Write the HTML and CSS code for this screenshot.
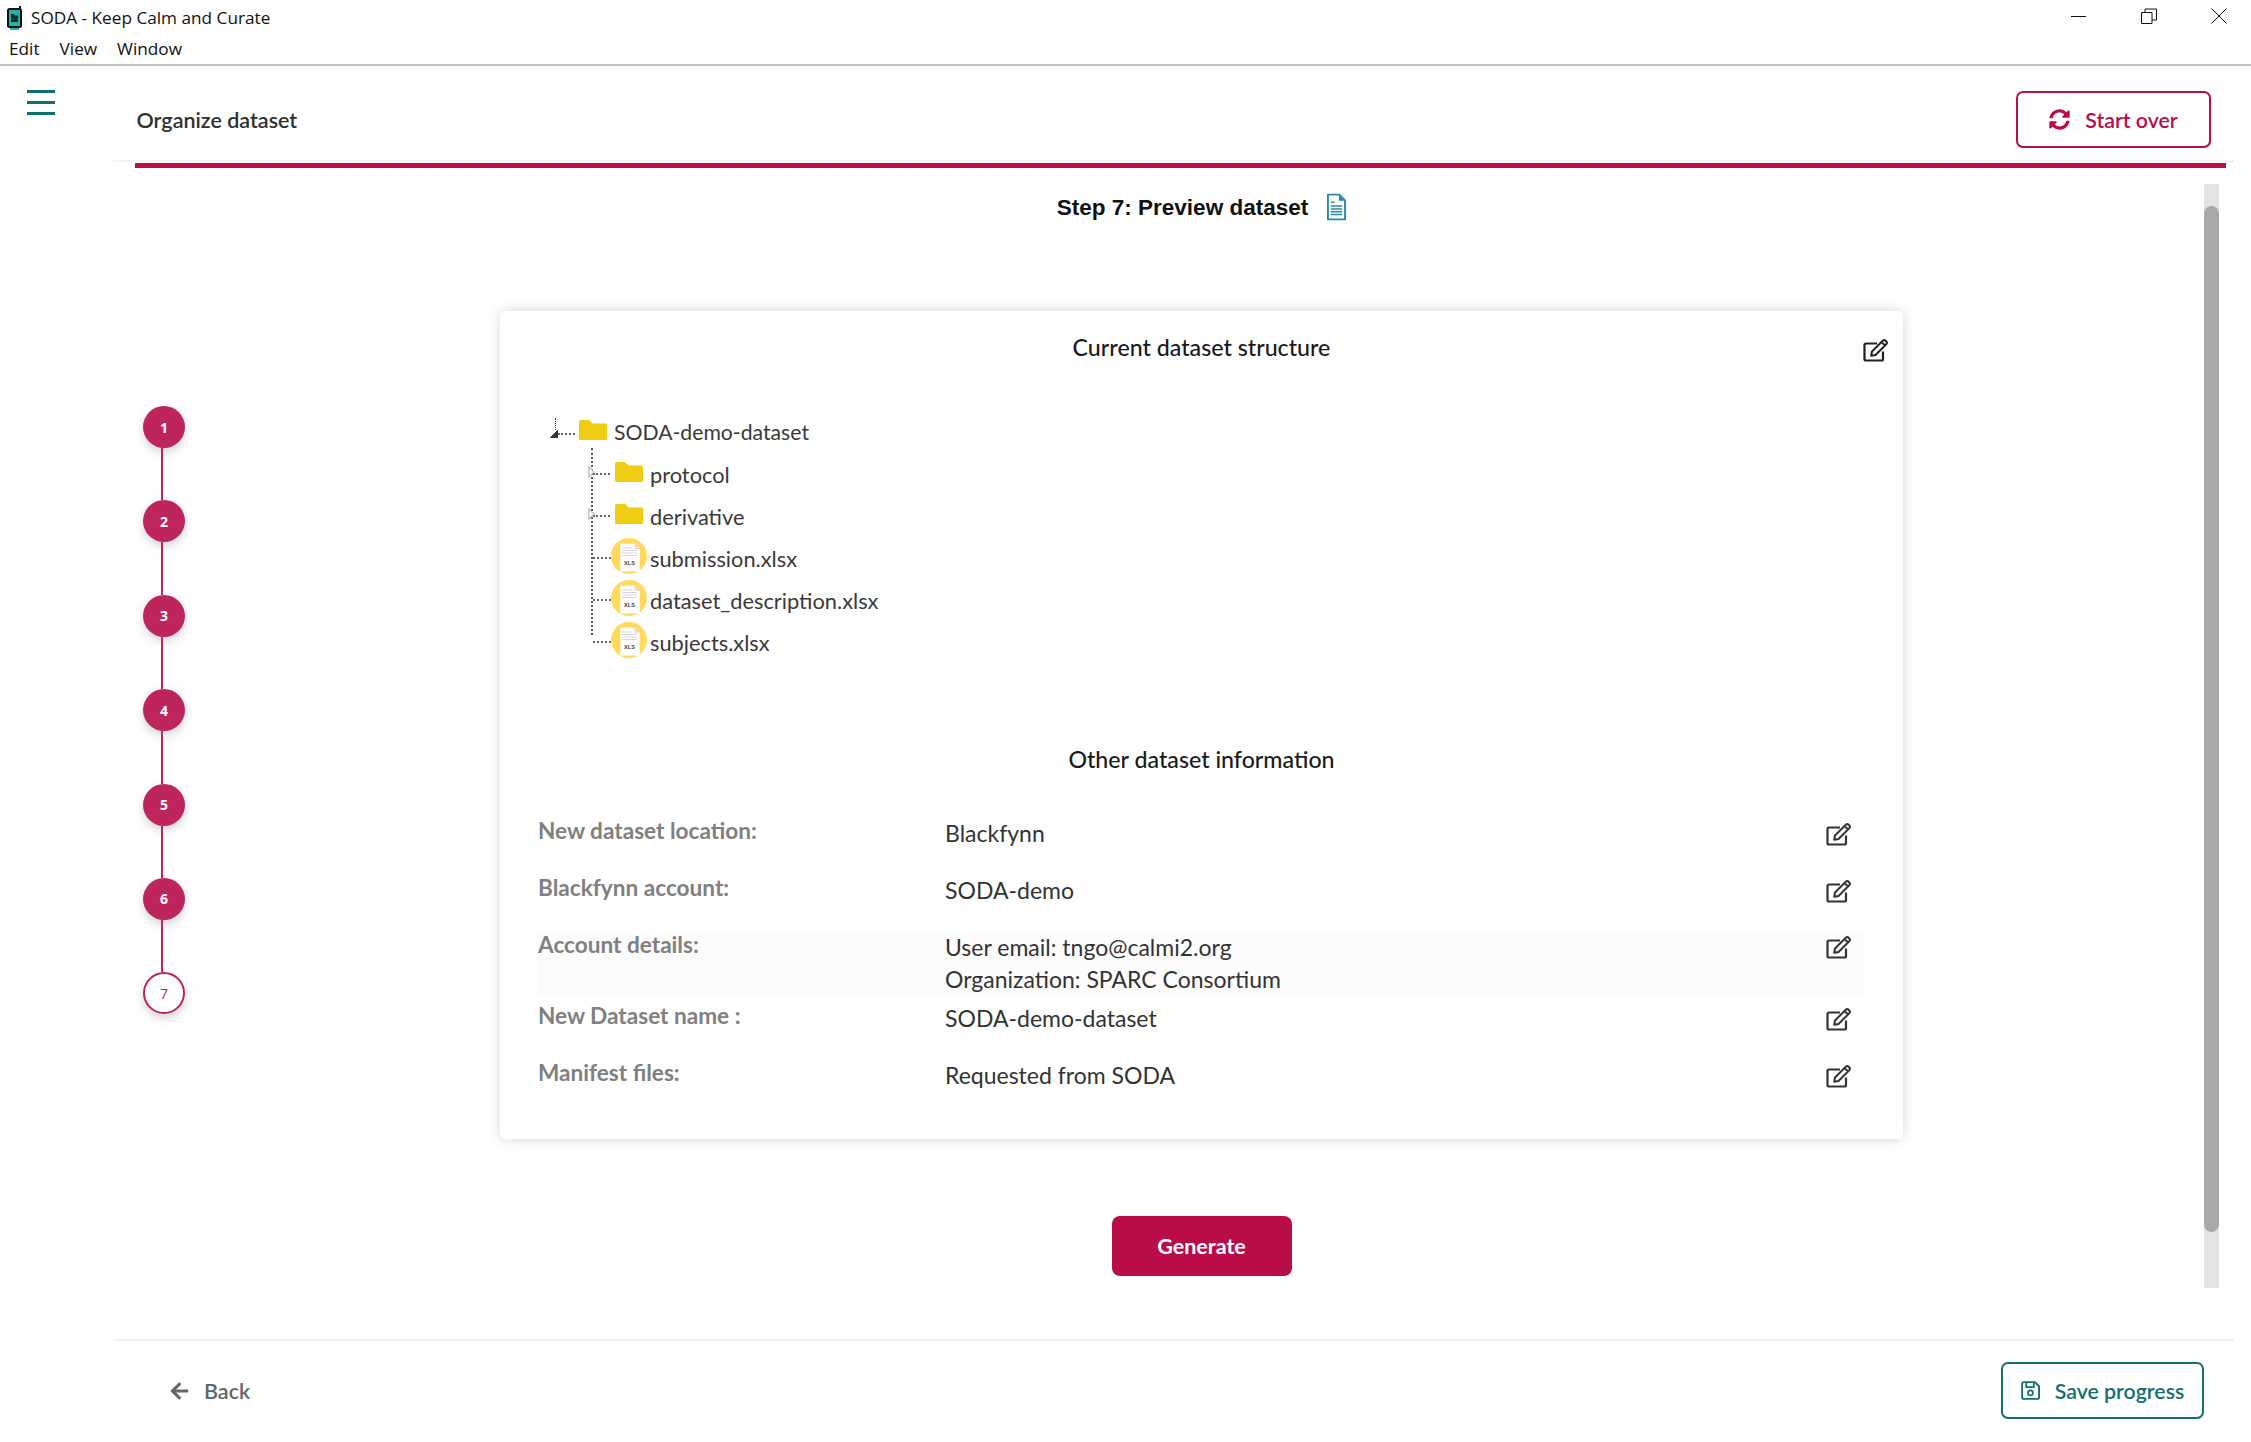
FILE: index.html
```html
<!DOCTYPE html>
<html lang="en">
<head>
<meta charset="utf-8">
<title>SODA - Keep Calm and Curate</title>
<link rel="stylesheet" href="styles.css">
</head>
<body>
<svg class="defs" width="0" height="0" aria-hidden="true">
  <symbol id="edit" viewBox="0 0 26 24">
    <path d="M20 13.500V21a1.500 1.500 0 0 1-1.500 1.500H3A1.500 1.500 0 0 1 1.500 21V7A1.500 1.500 0 0 1 3 5.500h11" fill="none" stroke="currentColor" stroke-width="2.200"/>
    <path d="M9 13.500 20 2.500a1.600 1.600 0 0 1 2.300 0l1.200 1.200a1.600 1.600 0 0 1 0 2.300L12.500 17l-4.300 .8zM18.500 4l3.500 3.500" fill="none" stroke="currentColor" stroke-width="2" stroke-linejoin="round"/>
  </symbol>
  <symbol id="folder" viewBox="0 0 28 20">
    <path d="M1.500 0h8.500l3.500 3.500h13A1.500 1.500 0 0 1 28 5v13.500a1.500 1.500 0 0 1-1.500 1.500h-25A1.500 1.500 0 0 1 0 18.500v-17A1.500 1.500 0 0 1 1.500 0z" fill="#eecd14"/>
  </symbol>
  <symbol id="xls-base" viewBox="0 0 36 36">
    <circle cx="18" cy="18" r="18" fill="#ffda5e"/>
    <path d="M9.300 5.800h14l5.400 5.200v22.500H9.300z" fill="#fff"/>
    <path d="M23.300 5.800v5.200h5.400z" fill="#dcdce6"/>
    <path d="M11 10h10M11 12.500h15M11 15h15M11 17.500h15" stroke="#d5d5df" stroke-width="1"/>
  </symbol>
  <symbol id="tri" viewBox="0 0 7 12">
    <path d="M.8 .8 6 6 .8 11.200z" fill="#fff" stroke="#bdbdbd" stroke-width="1.300"/>
  </symbol>
</svg>

<div class="titlebar">
  <div class="titlebar-left">
    <div class="title-row">
      <svg class="app-logo" viewBox="0 0 15 24" width="15" height="24"><path d="M12 0h2v3h-2z" fill="#111"/><rect x="0" y="2" width="15" height="20" rx="2.500" fill="#111"/><rect x="2" y="4" width="11" height="16" fill="#1eb3a6"/><path d="M4 8h3l1 1.500h3V16H4z" fill="#10302f"/><path d="M3 22h9v2H3z" fill="#1eb3a6"/></svg>
      <span>SODA - Keep Calm and Curate</span>
    </div>
    <nav class="menubar"><span>Edit</span><span>View</span><span>Window</span></nav>
  </div>
  <div class="window-controls">
    <svg viewBox="0 0 16 16" width="16" height="16"><path d="M0 8.500h15" stroke="#111" stroke-width="1"/></svg>
    <svg viewBox="0 0 16 16" width="16" height="16"><path d="M.5 4.500h10.500v11H.5zM4 4.500V1h11.500v11H11" fill="none" stroke="#111" stroke-width="1"/></svg>
    <svg viewBox="0 0 16 16" width="16" height="16"><path d="M.5 .5l15 15M15.500 .5l-15 15" stroke="#111" stroke-width="1"/></svg>
  </div>
</div>

<div class="top">
  <div class="menu-col">
    <div class="hamburger"><i></i><i></i><i></i></div>
  </div>
  <div class="head-block">
    <header class="head">
      <h1 class="page-title">Organize dataset</h1>
      <button class="btn btn-red">
        <svg class="ico-sync" viewBox="0 0 512 512"><path fill="currentColor" d="M370.72 133.28C339.458 104.008 298.888 87.962 255.848 88c-77.458.068-144.328 53.178-162.791 126.85-1.344 5.363-6.122 9.15-11.651 9.15H24.103c-7.498 0-13.194-6.807-11.807-14.176C33.933 94.924 134.813 8 256 8c66.448 0 126.791 26.136 171.315 68.685L463.03 40.97C478.149 25.851 504 36.559 504 57.941V192c0 13.255-10.745 24-24 24H345.941c-21.382 0-32.09-25.851-16.971-40.971l41.75-41.749zM32 296h134.059c21.382 0 32.09 25.851 16.971 40.971l-41.75 41.75c31.262 29.273 71.835 45.319 114.876 45.28 77.418-.07 144.315-53.144 162.787-126.849 1.344-5.363 6.122-9.15 11.651-9.15h57.304c7.498 0 13.194 6.807 11.807 14.176C478.067 417.076 377.187 504 256 504c-66.448 0-126.791-26.136-171.315-68.685L48.97 471.03C33.851 486.149 8 475.441 8 454.059V320c0-13.255 10.745-24 24-24z"/></svg>
        Start over
      </button>
    </header>
    <div class="red-bar"></div>
  </div>
</div>

<main class="main">
  <aside class="stepper">
    <div class="step">1</div><div class="conn"></div>
    <div class="step">2</div><div class="conn"></div>
    <div class="step">3</div><div class="conn"></div>
    <div class="step">4</div><div class="conn"></div>
    <div class="step">5</div><div class="conn"></div>
    <div class="step">6</div><div class="conn"></div>
    <div class="step step-open">7</div>
  </aside>
  <section class="content">
    <h2 class="step-title">Step 7: Preview dataset
      <svg class="ico-doc" viewBox="0 0 20 28"><path d="M1 1h12l6 6v20H1z" fill="none" stroke="#2b8ba3" stroke-width="2"/><path d="M12.500 1v6.500H19z" fill="#2b8ba3"/><path d="M4 9h4M4 13h12M4 16h12M4 19h12M4 22h12" stroke="#2b8ba3" stroke-width="1.600"/></svg>
    </h2>
    <div class="card">
      <div class="card-head">
        <h3 class="card-title">Current dataset structure</h3>
        <svg class="ico-edit ico-edit-top"><use href="#edit"/></svg>
      </div>
      <div class="tree">
        <div class="tree-row root">
          <span class="caret"></span><span class="dash"></span>
          <svg class="ico-folder"><use href="#folder"/></svg>
          <span class="node-label root-label">SODA-demo-dataset</span>
        </div>
        <div class="tree-children">
          <div class="tree-row"><svg class="tick"><use href="#tri"/></svg><span class="dash"></span><svg class="ico-folder"><use href="#folder"/></svg><span class="node-label">protocol</span></div>
          <div class="tree-row"><svg class="tick"><use href="#tri"/></svg><span class="dash"></span><svg class="ico-folder"><use href="#folder"/></svg><span class="node-label">derivative</span></div>
          <div class="tree-row"><span class="dash dash-file"></span><svg class="ico-xls" viewBox="0 0 36 36"><use href="#xls-base"/><text x="18.500" y="27" text-anchor="middle" class="xls-label">XLS</text></svg><span class="node-label">submission.xlsx</span></div>
          <div class="tree-row"><span class="dash dash-file"></span><svg class="ico-xls" viewBox="0 0 36 36"><use href="#xls-base"/><text x="18.500" y="27" text-anchor="middle" class="xls-label">XLS</text></svg><span class="node-label">dataset_description.xlsx</span></div>
          <div class="tree-row"><span class="dash dash-file"></span><svg class="ico-xls" viewBox="0 0 36 36"><use href="#xls-base"/><text x="18.500" y="27" text-anchor="middle" class="xls-label">XLS</text></svg><span class="node-label">subjects.xlsx</span></div>
        </div>
      </div>
      <h3 class="card-title other-title">Other dataset information</h3>
      <div class="info">
        <div class="info-row"><div class="info-label">New dataset location:</div><div class="info-value">Blackfynn</div><svg class="ico-edit"><use href="#edit"/></svg></div>
        <div class="info-row"><div class="info-label">Blackfynn account:</div><div class="info-value">SODA-demo</div><svg class="ico-edit"><use href="#edit"/></svg></div>
        <div class="info-row info-row-alt"><div class="info-label">Account details:</div><div class="info-value">User email: tngo@calmi2.org<br>Organization: SPARC Consortium</div><svg class="ico-edit"><use href="#edit"/></svg></div>
        <div class="info-row info-row-tight"><div class="info-label">New Dataset name :</div><div class="info-value">SODA-demo-dataset</div><svg class="ico-edit"><use href="#edit"/></svg></div>
        <div class="info-row"><div class="info-label">Manifest files:</div><div class="info-value">Requested from SODA</div><svg class="ico-edit"><use href="#edit"/></svg></div>
      </div>
    </div>
    <button class="generate">Generate</button>
  </section>
  <div class="scrollbar"><div class="thumb"></div></div>
</main>

<footer class="footer">
  <div class="back">
    <svg class="ico-back" viewBox="0 0 448 512"><path fill="currentColor" d="M257.500 445.100l-22.200 22.200c-9.400 9.400-24.600 9.400-33.900 0L7 273c-9.400-9.400-9.400-24.600 0-33.900L201.400 44.700c9.400-9.400 24.600-9.400 33.900 0l22.200 22.200c9.500 9.500 9.300 25-.4 34.300L136.600 216H424c13.300 0 24 10.700 24 24v32c0 13.300-10.700 24-24 24H136.600l120.500 114.800c9.800 9.300 10 24.800.4 34.300z"/></svg>
    Back
  </div>
  <button class="btn btn-teal">
    <svg class="ico-save" viewBox="0 0 20 20"><path d="M3 1.200h11.500L19 5.500V17a1.800 1.800 0 0 1-1.800 1.800H3A1.800 1.800 0 0 1 1.200 17V3A1.800 1.800 0 0 1 3 1.200z" fill="none" stroke="currentColor" stroke-width="2"/><path d="M5.500 1.500v5h8v-5" fill="none" stroke="currentColor" stroke-width="1.800"/><circle cx="10" cy="12.500" r="2.600" fill="none" stroke="currentColor" stroke-width="1.800"/></svg>
    Save progress
  </button>
</footer>
</body>
</html>
```
FILE: styles.css
```css
* { box-sizing: border-box; }
html, body { margin: 0; padding: 0; }
body {
  width: 2251px;
  height: 1442px;
  overflow: hidden;
  background: #fff;
  color: #303030;
  font-family: Lato, "Open Sans", sans-serif;
}
.defs { display: block; height: 0; }
.xls-label { font: 700 5.600px "Liberation Sans", sans-serif; fill: #444; }

/* window chrome */
.titlebar {
  display: flex;
  justify-content: space-between;
  height: 66px;
  border-bottom: 2px solid #c1c1c1;
  font-family: "Open Sans", sans-serif;
  font-size: 17.200px;
  color: #111;
}
.title-row { display: flex; align-items: center; gap: 9px; height: 35px; padding-left: 7px; }
.menubar { display: flex; gap: 20px; padding-left: 9px; height: 26px; align-items: center; font-size: 17.200px; }
.window-controls { display: flex; gap: 54px; padding: 8px 24px 0 0; align-items: flex-start; }

/* page header */
.top { display: flex; }
.menu-col { width: 113px; padding: 24px 0 0 27px; }
.hamburger { display: flex; flex-direction: column; gap: 8px; width: 28px; }
.hamburger i { display: block; height: 3px; background: #13716d; }
.head-block { flex: 1; margin-right: 17px; }
.head {
  display: flex;
  justify-content: space-between;
  align-items: center;
  padding: 25px 23px 12px 23.500px;
  border-bottom: 2px solid #f3f3f3;
}
.page-title { margin: 0; font-size: 21.500px; font-weight: 600; color: #303030; }
.red-bar { height: 5px; margin: 1px 8px 0 22px; background: #b80d49; }

.btn {
  display: flex;
  align-items: center;
  justify-content: center;
  height: 57px;
  border-radius: 7px;
  background: #fff;
  font: 600 21.300px Lato, sans-serif;
}
.btn-red { width: 195px; gap: 15px; border: 2px solid #b80d49; color: #b80d49; }
.btn-teal { width: 203px; gap: 15px; border: 2px solid #13716d; color: #13716d; }
.ico-sync { width: 21px; height: 21px; }
.ico-save { width: 19px; height: 19px; }
.ico-back { width: 19px; height: 20px; }

/* main */
.main { display: flex; height: 1104px; margin-top: 16px; }
.stepper {
  width: 199px;
  padding: 222px 0 0 143px;
  display: flex;
  flex-direction: column;
}
.step {
  flex: none;
  width: 42px;
  height: 42px;
  border-radius: 50%;
  background: #bf255d;
  color: #fff;
  display: flex;
  align-items: center;
  justify-content: center;
  font: 700 14px "Open Sans", sans-serif;
  box-shadow: 0 4px 10px rgba(60, 60, 70, .22);
}
.step-open { background: #fff; border: 2px solid #bf255d; color: #bf255d; font-weight: 400; }
.conn { flex: none; width: 2px; height: 52.400px; margin-left: 18px; background: #bf255d; }

.content {
  flex: none;
  width: 2005px;
  display: flex;
  flex-direction: column;
  align-items: center;
  padding-top: 8px;
}
.step-title {
  display: flex;
  align-items: center;
  gap: 19px;
  height: 32px;
  margin: 0;
  font: 700 22.500px "Liberation Sans", sans-serif;
  color: #111;
}
.ico-doc { width: 19px; height: 28px; margin-top: -3px; }

.card {
  position: relative;
  width: 1403px;
  height: 828px;
  margin-top: 87px;
  padding: 20px 38px 0;
  border-radius: 5px;
  background: #fff;
  box-shadow: 0 0 12px rgba(0, 0, 0, .17);
}
.card-title { margin: 0; height: 32px; line-height: 32px; text-align: center; font-size: 23.200px; font-weight: 500; color: #1a1a1a; }
.card-head { position: relative; }
.ico-edit { flex: none; width: 26px; height: 24px; color: #333; }
.ico-edit-top { position: absolute; right: -24px; top: 7px; color: #222; }

/* tree */
.tree { margin: 48px 0 0 12px; font-size: 21.800px; color: #3a3a3a; }
.tree-row { position: relative; display: flex; align-items: center; height: 42px; }
.caret {
  position: relative;
  width: 8px;
  height: 8px;
  margin-top: 3px;
  background: linear-gradient(135deg, transparent 50%, #333 50%);
}
.caret::before {
  content: "";
  position: absolute;
  left: 5px;
  top: -12px;
  height: 12px;
  border-left: 1px dotted #333;
}
.dash { width: 17px; height: 0; border-top: 2px dotted #666; }
.root .dash { margin: 3px 4px 0 0; width: 17px; }
.ico-folder { flex: none; width: 28px; height: 20px; margin-top: -4px; }
.node-label { margin-left: 7px; }
.root-label { font-size: 21.200px; }
.tree-children {
  position: relative;
  margin: -5px 0 0 41px;
  padding: 5px 0 0 2px;
}
.tree-children::before {
  content: "";
  position: absolute;
  left: 0;
  top: 0;
  height: 187px;
  border-left: 2px dotted #555;
}
.tree-children .ico-folder { margin-left: 5px; }
.tick {
  position: absolute;
  left: -5px;
  width: 7px;
  height: 12px;
  margin-top: -4px;
}
.dash-file { width: 18px; }
.ico-xls { flex: none; width: 36px; height: 36px; margin-top: -4px; }
.ico-xls + .node-label { margin-left: 3px; }

.other-title { margin-top: 80px; }

/* info */
.info { display: flex; flex-direction: column; margin-top: 42px; font-size: 23px; }
.info-row {
  display: flex;
  align-items: flex-start;
  margin-bottom: 25px;
  line-height: 32px;
}
.info-label { flex: none; width: 407px; margin-top: -2px; color: #808080; font-weight: 700; font-size: 22.600px; }
.info-value { flex: 1; color: #333; }
.info-row .ico-edit { margin: 5px 13.500px 0 0; }
.info-row-alt { margin: 2px 0 7px; background: #fcfcfc; }
.info-row-alt .info-label { margin-top: -4px; }
.info-row-alt .info-value { margin-top: -2px; }
.info-row-alt .ico-edit { margin-top: 2px; }

.generate {
  flex: none;
  width: 180px;
  height: 60px;
  margin-top: 77px;
  border: 0;
  border-radius: 8px;
  background: #b80d49;
  color: #fff;
  font: 700 21.500px Lato, sans-serif;
}

.scrollbar { flex: none; width: 15px; height: 1104px; background: #e3e3e3; padding-top: 22px; }
.thumb { height: 1026px; background: #a9a9a9; border-radius: 8px; }

/* footer */
.footer {
  display: flex;
  justify-content: space-between;
  align-items: center;
  margin: 51px 17px 0 113px;
  padding: 21px 30px 0 57px;
  border-top: 2px solid #f0f0f0;
}
.back { display: flex; align-items: center; gap: 15px; font-size: 21.500px; font-weight: 600; color: #666; }
```
